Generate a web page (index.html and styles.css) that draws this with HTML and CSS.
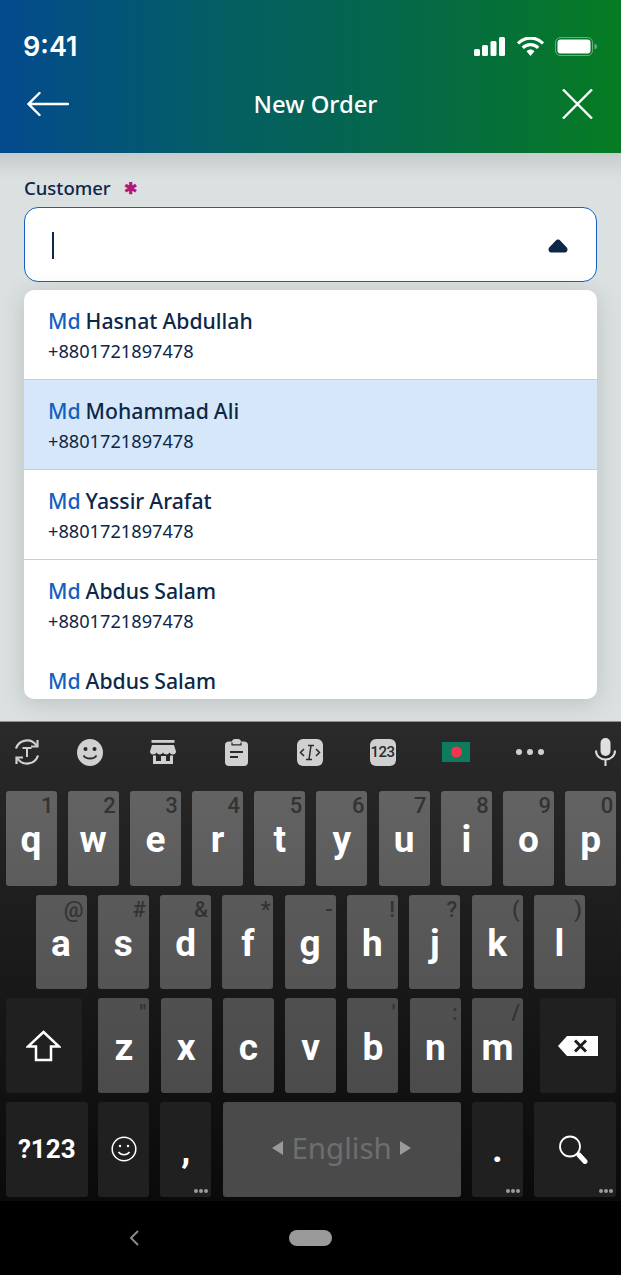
FILE: index.html
```html
<!DOCTYPE html>
<html lang="en">
<head>
    <meta charset="UTF-8">
    <meta name="viewport" content="width=device-width, initial-scale=1.0">
    <title>New Order</title>
    <link rel="stylesheet" href="styles.css">
</head>
<body>
<div class="phone">
    <header class="app-header">
        <div class="status-bar">
            <span class="clock">9:41</span>
            <div class="status-icons">
                <svg width="31" height="19" viewBox="0 0 31 19"><rect x="0" y="12" width="6" height="7" rx="1.5"/><rect x="8" y="8" width="6" height="11" rx="1.5"/><rect x="16.500" y="4" width="6" height="15" rx="1.500"/><rect x="25" y="0" width="6" height="19" rx="1.500"/></svg>
                <svg width="27" height="19" viewBox="0 0 27 19"><path d="M1 6.500C8 -0.800 19 -0.800 26 6.500" fill="none" stroke="#fff" stroke-width="3.200"/><path d="M5.800 10.800C10 6.500 17 6.500 21.200 10.800" fill="none" stroke="#fff" stroke-width="3.200"/><path d="M9.500 14.200L13.500 19L17.500 14.200C15.300 12 11.700 12 9.500 14.200Z"/></svg>
                <svg width="42" height="19" viewBox="0 0 42 19"><rect x="0.500" y="0.500" width="37" height="18" rx="5" fill="none" stroke="#fff" stroke-opacity="0.400"/><rect x="2.500" y="2.500" width="33" height="14" rx="3"/><path d="M39.500 6.500C41 7 42 8 42 9.500C42 11 41 12 39.500 12.500Z" fill-opacity="0.400"/></svg>
            </div>
        </div>
        <div class="title-bar">
            <svg width="42" height="24" viewBox="0 0 42 24" fill="none" stroke="#fff" stroke-width="2.400" stroke-linecap="round"><path d="M41 12H2M12.500 1L1.500 12L12.500 23"/></svg>
            <h1 class="title">New Order</h1>
            <svg width="31" height="30" viewBox="0 0 31 30" fill="none" stroke="#fff" stroke-width="2.400"><path d="M1 0.500L30 29.500M30 0.500L1 29.500"/></svg>
        </div>
    </header>

    <main class="content">
        <div class="field-label">Customer <span class="required">&#x2731;</span></div>
        <div class="select-box">
            <span class="caret"></span>
            <svg width="20" height="14" viewBox="0 0 20 14"><path d="M10 0.500C11 0.500 11.800 1 12.400 1.700L18.800 8.600C20.300 10.300 19.300 13.500 17 13.500H3C0.700 13.500 -0.300 10.300 1.200 8.600L7.600 1.700C8.200 1 9 0.500 10 0.500Z" fill="#0d2748"/></svg>
        </div>
        <ul class="customer-list">
            <li class="customer"><div class="customer-name"><b>Md</b> Hasnat Abdullah</div><div class="customer-phone">+8801721897478</div></li>
            <li class="customer selected"><div class="customer-name"><b>Md</b> Mohammad Ali</div><div class="customer-phone">+8801721897478</div></li>
            <li class="customer"><div class="customer-name"><b>Md</b> Yassir Arafat</div><div class="customer-phone">+8801721897478</div></li>
            <li class="customer last"><div class="customer-name"><b>Md</b> Abdus Salam</div><div class="customer-phone">+8801721897478</div></li>
            <li class="customer"><div class="customer-name"><b>Md</b> Abdus Salam</div></li>
        </ul>
    </main>

    <section class="keyboard">
        <div class="toolbar">
            <svg width="28" height="28" viewBox="0 0 28 28" fill="none" stroke="#d0d0d0" stroke-width="2.200"><path d="M3 10.500A11.500 11.500 0 0 1 23.500 7.500"/><path d="M25 17.500A11.500 11.500 0 0 1 4.500 20.500"/><path d="M24.500 2V8.500H18M3.500 26V19.500H10"/><path d="M9.500 10H18.500M14 10V19" stroke-width="2"/></svg>
            <svg width="26" height="27" viewBox="0 0 26 27"><ellipse cx="13" cy="13.500" rx="13" ry="13.500" fill="#d0d0d0"/><circle cx="8.500" cy="10" r="2" fill="#2a2a2a"/><circle cx="17.500" cy="10" r="2" fill="#2a2a2a"/><path d="M6.500 16.500C9 20.500 17 20.500 19.500 16.500" fill="none" stroke="#2a2a2a" stroke-width="1.800"/></svg>
            <svg width="26" height="24" viewBox="0 0 26 24" fill="#d0d0d0"><rect x="1.500" y="0" width="23" height="2.800"/><path d="M2 5H24L26 11.500C26 13.500 24.500 14.500 23 14.500C21.500 14.500 20 13.500 19.500 12.500C19 13.500 17.500 14.500 16.200 14.500C15 14.500 13.600 13.500 13 12.500C12.400 13.500 11 14.500 9.800 14.500C8.500 14.500 7 13.500 6.500 12.500C6 13.500 4.500 14.500 3 14.500C1.500 14.500 0 13.500 0 11.500Z"/><path d="M3 15.500H6V21H11V16H16V21H20V15.500H23V24H3Z"/></svg>
            <svg width="23" height="27" viewBox="0 0 23 27"><path d="M7 2.500C7 1 8.500 0 10 0H13C14.500 0 16 1 16 2.500H19C21.500 2.500 23 4 23 6V23C23 25.500 21.500 27 19 27H4C1.500 27 0 25.500 0 23V6C0 4 1.500 2.500 4 2.500Z" fill="#d0d0d0"/><path d="M7 3.500V5.800H16V3.500" fill="none" stroke="#2a2a2a" stroke-width="1.200"/><rect x="5" y="12" width="13" height="2" fill="#2a2a2a"/><rect x="5" y="17" width="8" height="2" fill="#2a2a2a"/></svg>
            <svg width="26" height="27" viewBox="0 0 26 27"><rect width="26" height="27" rx="6" fill="#d0d0d0"/><path d="M7 10L3.500 13.500L7 17M19 10L22.500 13.500L19 17M11 6.500H17M9 20.500H15M14 6.500L12 20.500" fill="none" stroke="#2a2a2a" stroke-width="1.500"/></svg>
            <span class="tool-num">123</span>
            <svg width="28" height="20" viewBox="0 0 28 20"><rect width="28" height="20" fill="#107a5c"/><circle cx="14.500" cy="10" r="5.500" fill="#f0364f"/></svg>
            <span class="tool-dots"><i></i><i></i><i></i></span>
            <svg class="tool-mic" width="21" height="28" viewBox="0 0 21 28" fill="none"><rect x="5.500" y="0" width="10" height="18" rx="5" fill="#e0e0e0"/><path d="M1 12.500C1 18 5 21.500 10.500 21.500C16 21.500 20 18 20 12.500M10.500 21.500V28" stroke="#e0e0e0" stroke-width="2"/></svg>
        </div>

        <div class="key-row row-1">
            <div class="key"><sup>1</sup>q</div><div class="key"><sup>2</sup>w</div><div class="key"><sup>3</sup>e</div><div class="key"><sup>4</sup>r</div><div class="key"><sup>5</sup>t</div><div class="key"><sup>6</sup>y</div><div class="key"><sup>7</sup>u</div><div class="key"><sup>8</sup>i</div><div class="key"><sup>9</sup>o</div><div class="key"><sup>0</sup>p</div>
        </div>
        <div class="key-row row-2">
            <div class="key"><sup>@</sup>a</div><div class="key"><sup>#</sup>s</div><div class="key"><sup>&amp;</sup>d</div><div class="key"><sup>*</sup>f</div><div class="key"><sup>-</sup>g</div><div class="key"><sup>!</sup>h</div><div class="key"><sup>?</sup>j</div><div class="key"><sup>(</sup>k</div><div class="key"><sup>)</sup>l</div>
        </div>
        <div class="key-row row-3">
            <div class="key dark wide-shift">
                <svg width="35" height="32" viewBox="0 0 35 32" fill="none" stroke="#fff" stroke-width="2.500"><path d="M17.500 2L33 16.500H25V30H10V16.500H2Z"/></svg>
            </div>
            <div class="key"><sup>"</sup>z</div><div class="key">x</div><div class="key">c</div><div class="key">v</div><div class="key"><sup>'</sup>b</div><div class="key"><sup>:</sup>n</div><div class="key"><sup>/</sup>m</div>
            <div class="key dark wide-back">
                <svg width="40" height="20" viewBox="0 0 40 20"><path d="M9 0H40V20H9L0 10Z" fill="#fff"/><path d="M17 4.500L28 15.500M28 4.500L17 15.500" stroke="#1f1f1f" stroke-width="3"/></svg>
            </div>
        </div>
        <div class="key-row row-4">
            <div class="key dark wide-sym">?123</div>
            <div class="key dark">
                <svg width="26" height="26" viewBox="0 0 26 26" fill="none" stroke="#fff" stroke-width="1.500"><ellipse cx="13" cy="13" rx="11.800" ry="11.800"/><circle cx="9" cy="10" r="1.200" fill="#fff" stroke="none"/><circle cx="17" cy="10" r="1.200" fill="#fff" stroke="none"/><path d="M7.500 16C10 19.500 16 19.500 18.500 16"/></svg>
            </div>
            <div class="key dark comma">,<span class="more"><i></i><i></i><i></i></span></div>
            <div class="key space"><span class="arrow-left"></span>English<span class="arrow-right"></span></div>
            <div class="key dark period">.<span class="more"><i></i><i></i><i></i></span></div>
            <div class="key dark wide-search">
                <svg class="search-icon" width="30" height="29" viewBox="0 0 30 29" fill="none" stroke="#fff"><circle cx="12" cy="11.500" r="10" stroke-width="1.800"/><path d="M19 18L21 20" stroke-width="2"/><path d="M21 20L27 26.500" stroke-width="5" stroke-linecap="round"/></svg>
                <span class="more"><i></i><i></i><i></i></span>
            </div>
        </div>
    </section>

    <nav class="nav-bar">
        <svg class="nav-back" width="10" height="16" viewBox="0 0 10 16" fill="none" stroke="#8a8a8a" stroke-width="2"><path d="M9 1L2 8L9 15"/></svg>
        <span class="nav-home"></span>
    </nav>
</div>
</body>
</html>
```

FILE: styles.css
```css
* {
    box-sizing: border-box;
}
body {
    margin: 0;
    font-family: "Noto Sans", Arial, sans-serif;
    background: #000;
}
.phone {
    width: 621px;
    height: 1275px;
    overflow: hidden;
    display: flex;
    flex-direction: column;
}

/* header */
.app-header {
    height: 153px;
    flex: none;
    background: linear-gradient(90deg, #034a8e 0%, #045e64 35%, #056a44 70%, #067c22 100%);
    color: #fff;
    padding: 30px 24px 0 23px;
    position: relative;
    z-index: 1;
}
.status-bar {
    display: flex;
    justify-content: space-between;
    align-items: center;
    height: 32px;
}
.clock {
    font-family: Inter, sans-serif;
    font-weight: 600;
    font-size: 27px;
}
.status-icons {
    display: flex;
    gap: 11.500px;
    fill: #fff;
}
.title-bar {
    display: flex;
    justify-content: space-between;
    align-items: center;
    margin-top: 26px;
    padding: 0 4px;
}
.title {
    margin: 0;
    font-size: 23.800px;
    font-weight: 500;
}

/* form */
.content {
    height: 568px;
    flex: none;
    padding: 24px 24px 0;
    background: #dbe0e0;
    background-image: linear-gradient(#c6cbcb, #dbe0e0 26px);
}
.field-label {
    font-size: 18.500px;
    font-weight: 500;
    line-height: 22px;
    color: #0d2748;
}
.required {
    color: #b5177a;
    font-size: 16px;
    font-weight: 700;
    line-height: 18px;
    margin-left: 8px;
    vertical-align: 1px;
}
.select-box {
    height: 75px;
    margin-top: 8px;
    padding: 2px 28.500px 0 26.500px;
    display: flex;
    justify-content: space-between;
    align-items: center;
    background: #fff;
    border: 1.500px solid #1560c4;
    border-radius: 14px;
}
.caret {
    width: 2px;
    height: 27px;
    background: #0d2748;
}
.customer-list {
    list-style: none;
    margin: 8px 0 0;
    padding: 0;
    height: 409px;
    overflow: hidden;
    background: #fff;
    border-radius: 10px;
    box-shadow: 0 4px 22px rgba(90, 105, 105, 0.25);
}
.customer {
    height: 90px;
    padding: 17px 24px 0;
    border-bottom: 1px solid #c5cfdc;
    color: #0d2748;
}
.customer.selected {
    background: #d6e7f9;
}
.customer.last {
    border-bottom: none;
}
.customer-name {
    font-size: 21.200px;
    font-weight: 500;
    line-height: 28px;
    word-spacing: -0.500px;
}
.customer-name b {
    color: #1360bf;
    font-weight: 500;
}
.customer-phone {
    font-size: 18.200px;
    line-height: 26px;
    margin-top: 3px;
}

/* keyboard */
.keyboard {
    height: 480px;
    flex: none;
    background: linear-gradient(#2a2a2a, #0a0a0a);
    border-top: 1px solid #8a8e8e;
}
.toolbar {
    height: 69px;
    padding-bottom: 9px;
    display: grid;
    grid-template-columns: 54px 72px 74px 73px 73px 73px 74px 74px 54px;
    justify-items: center;
    align-items: center;
}
.tool-num {
    width: 26px;
    height: 27px;
    border-radius: 6px;
    background: #d0d0d0;
    color: #2a2a2a;
    font-size: 15px;
    font-weight: 500;
    letter-spacing: -0.500px;
    font-family: Roboto, sans-serif;
    line-height: 27px;
    text-align: center;
}
.tool-dots {
    display: flex;
    gap: 5px;
}
.tool-dots i {
    width: 6px;
    height: 6px;
    border-radius: 50%;
    background: #d0d0d0;
}
.tool-mic {
    margin-left: 22px;
}
.key-row {
    display: flex;
    gap: 11.300px;
    height: 94.700px;
    padding-left: 5.500px;
    margin-bottom: 9px;
}
.row-1 {
    gap: 11.200px;
}
.row-2 {
    padding-left: 35.500px;
}
.key {
    position: relative;
    width: 51px;
    flex: none;
    display: flex;
    align-items: center;
    justify-content: center;
    padding-top: 3px;
    border-radius: 3px;
    font-family: Roboto, sans-serif;
    font-weight: 700;
    font-size: 37px;
    color: #fff;
    background: linear-gradient(#636363, #5c5c5c);
}
.row-2 .key {
    background: linear-gradient(#5a5a5a, #545454);
}
.row-3 .key {
    background: linear-gradient(#505050, #4b4b4b);
}
.row-4 .key {
    background: #4a4a4a;
}
.key sup {
    position: absolute;
    top: 2px;
    right: 3px;
    font-size: 22px;
    font-weight: 500;
    line-height: 26px;
    color: #333;
}
.key.dark,
.row-3 .key.dark,
.row-4 .key.dark {
    background: #202020;
    padding-top: 0;
}
.wide-shift {
    width: 76.500px;
    margin-right: 5px;
}
.wide-back {
    width: 76px;
    margin-left: 5.600px;
}
.wide-sym {
    width: 82.500px;
    font-size: 26px;
    margin-right: -1.300px;
}
.wide-search {
    width: 82px;
}
.search-icon {
    margin-right: 4px;
}
.key.comma,
.key.period {
    padding-top: 12px;
}
.key.space {
    width: 238px;
    padding: 0 0 3px;
    gap: 8px;
    font-family: "Noto Sans", sans-serif;
    font-weight: 400;
    font-size: 29.500px;
    color: #6e6e6e;
}
.arrow-left,
.arrow-right {
    width: 0;
    height: 0;
    border-top: 7px solid transparent;
    border-bottom: 7px solid transparent;
}
.arrow-left {
    border-right: 11px solid #9a9a9a;
}
.arrow-right {
    border-left: 11px solid #9a9a9a;
}
.more {
    position: absolute;
    right: 3px;
    bottom: 4px;
    display: flex;
    gap: 1px;
}
.more i {
    width: 4px;
    height: 4px;
    border-radius: 50%;
    background: #9a9a9a;
}

/* android nav */
.nav-bar {
    flex: 1;
    background: #000;
    position: relative;
    display: flex;
    align-items: center;
    justify-content: center;
}
.nav-back {
    position: absolute;
    left: 129px;
    top: 29px;
}
.nav-home {
    width: 43px;
    height: 16px;
    border-radius: 8px;
    background: #9a9a9a;
}
```
